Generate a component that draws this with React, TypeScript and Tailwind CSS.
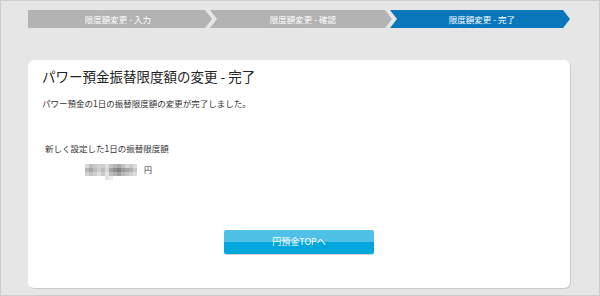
const steps = [
  { label: '限度額変更 - 入力', active: false, first: true, width: 'w-[184px]' },
  { label: '限度額変更 - 確認', active: false, first: false, width: 'w-[182px]' },
  { label: '限度額変更 - 完了', active: true, first: false, width: 'w-[180px]' },
];

// pixelated (masked) amount
const mosaic = [
  ['#d9d9d9', '#bdbdbd', '#c8c8c8', '#d2d2d2', '#cfcfcf', '#e0e0e0', '#c4c4c4', '#b5b5b5', '#a9a9a9', '#c0c0c0', '#d6d6d6', '#cbcbcb', '#dadada'],
  ['#b8b8b8', '#a6a6a6', '#bcbcbc', '#cdcdcd', '#bdbdbd', '#d8d8d8', '#a3a3a3', '#8e8e8e', '#7f7f7f', '#9b9b9b', '#a7a7a7', '#b2b2b2', '#c9c9c9'],
  ['#d0d0d0', '#c2c2c2', '#cecece', '#dedede', '#c9c9c9', '#e3e3e3', '#bdbdbd', '#b0b0b0', '#a0a0a0', '#b6b6b6', '#c4c4c4', '#cfcfcf', '#dddddd'],
  ['#ffffff', '#ffffff', '#ffffff', '#ffffff', '#ffffff', '#e2e2e2', '#eeeeee', '#ffffff', '#ffffff', '#ffffff', '#ffffff', '#ffffff', '#ffffff'],
];

const App = () => {
  return (
    <div className="w-[600px] h-[296px] bg-[#e6e6e6] border border-[#cdcdcd] pt-[9px] pl-[27px] font-['Noto_Sans_CJK_JP','Noto_Sans',sans-serif]">
      <div className="flex h-[18px] w-[542px]">
        {steps.map((s, i) => (
          <div
            key={i}
            className={
              'flex shrink-0 items-center justify-center text-center text-[8.5px] text-white ' +
              s.width +
              (s.active ? ' bg-[#0a77bd]' : ' bg-[#b3b3b3]') +
              (s.first
                ? ' pr-[4px] [clip-path:polygon(0_0,calc(100%-7px)_0,100%_50%,calc(100%-7px)_100%,0_100%)]'
                : ' -ml-[2px] pl-[4px] [clip-path:polygon(0_0,calc(100%-7px)_0,100%_50%,calc(100%-7px)_100%,0_100%,7px_50%)]')
            }
          >
            {s.label}
          </div>
        ))}
      </div>

      <div className="mt-[32px] w-[542px] h-[228px] bg-white rounded-[6px] shadow-[1px_1px_0_#cccccc] pt-[7px] flex flex-col text-[#333333]">
        <h1 className="pl-[14px] text-[13.5px] leading-[18px] text-[#222222]">パワー預金振替限度額の変更 - 完了</h1>
        <p className="mt-[12px] pl-[14px] text-[8.5px] leading-[12px]">パワー預金の1日の振替限度額の変更が完了しました。</p>
        <p className="mt-[33px] pl-[17px] text-[8.5px] leading-[12px]">新しく設定した1日の振替限度額</p>
        <div className="mt-[10px] pl-[57px] flex items-center gap-[7px]">
          <svg width="52" height="16" viewBox="0 0 52 16" className="block">
            {mosaic.map((row, r) =>
              row.map((c, k) => <rect key={`${r}-${k}`} x={k * 4} y={r * 4} width="4" height="4" fill={c} />)
            )}
          </svg>
          <span className="text-[8px] leading-[10px] -mt-[4px]">円</span>
        </div>
        <div className="flex-1" />
        <button className="self-center mb-[34px] w-[150px] h-[24px] rounded-[2px] bg-[linear-gradient(#4fc1e7_0,#4fc1e7_48%,#00a6dc_48%,#00a6dc_100%)] shadow-[0_1px_1px_#d0d0d0] text-white text-[9px] flex items-center justify-center">
          円預金TOPへ
        </button>
      </div>
    </div>
  );
};

export default App;
